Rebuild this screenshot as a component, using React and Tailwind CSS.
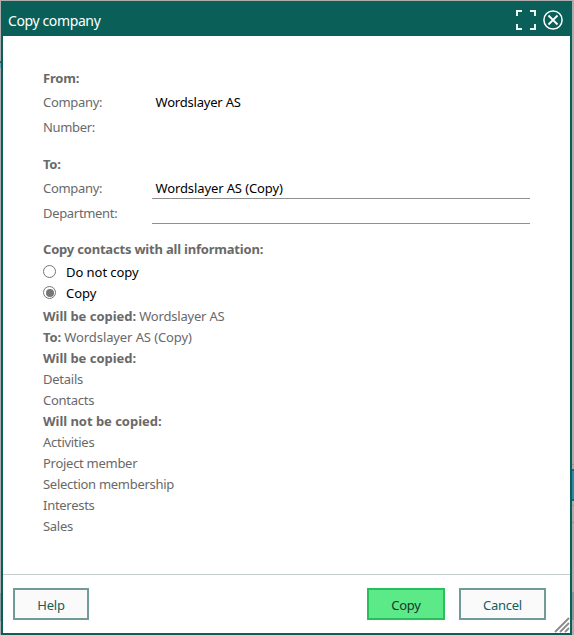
const COPIED = ["Details", "Contacts"];
const NOT_COPIED = ["Activities", "Project member", "Selection membership", "Interests", "Sales"];

function Heading({ children, className = "tracking-[-0.03px]" }) {
  return <div className={`font-bold ${className}`}>{children}</div>;
}

function Field({ label, value, editable }) {
  return (
    <div className="flex h-[25px]">
      <div className="w-[108px] leading-[25px] tracking-[-0.32px]">{label}</div>
      <div
        className={`ml-[0.5px] h-[23px] w-[378px] border-b pl-1 leading-[25px] text-black ${
          editable ? "border-[#8f8f8f] tracking-[-0.11px]" : "border-transparent tracking-[-0.2px]"
        }`}
      >
        {value}
      </div>
    </div>
  );
}

function Radio({ label, checked }) {
  return (
    <div className="flex h-[21px] items-center gap-[10px] text-black">
      <span className="mb-[2px] flex size-[13px] items-center justify-center rounded-full border border-[#757575] bg-white">
        {checked && <span className="size-[8px] rounded-full bg-[#757575]" />}
      </span>
      <span className="tracking-[-0.05px]">{label}</span>
    </div>
  );
}

function Button({ children, className }) {
  return (
    <button className={`flex h-8 items-center justify-center border-2 pt-[3px] ${className}`}>
      {children}
    </button>
  );
}

function LeftPage() {
  return (
    <div className="flex w-px flex-col bg-[#adadad]">
      <div className="mt-[60px] h-[2px] bg-[#315e6b]" />
      <div className="h-[5px] bg-[#62a2bd]" />
      <div className="mt-[525px] h-[28px] bg-[#879b9b]" />
    </div>
  );
}

function RightPage() {
  return (
    <div className="flex w-[2px] flex-col bg-[#adadad]">
      <div className="mt-[463px] h-px bg-[#929797]" />
      <div className="mt-[4px] h-[2px] bg-[#1b6a86]" />
      <div className="h-[28px] bg-[#3188a9]" />
      <div className="h-[2px] bg-[#1b6a86]" />
      <div className="mt-[4px] h-px bg-[#929797]" />
      <div className="mt-[16px] h-px bg-[#929797]" />
      <div className="mt-[69px] h-[28px] bg-[#879b9b]" />
    </div>
  );
}

export default function App() {
  return (
    <div className="flex h-[635px] w-[574px] overflow-hidden bg-[#adadad] pt-px font-['Noto_Sans',sans-serif] text-[13px] tracking-[-0.25px] text-[#696969]">
      <LeftPage />
      <div className="relative flex h-[634px] w-[571px] flex-col border-2 border-t-0 border-[#0a5f58] bg-white">
        <header className="flex h-[35px] items-center bg-[#0a5f58] pl-[5px] pr-[7px] text-white">
          <h1 className="flex-1 pt-[3px] text-[14px] tracking-[-0.38px]">Copy company</h1>
          <svg width="20" height="20" viewBox="0 0 20 20" fill="none" stroke="#edf5f3" strokeWidth="2" className="mr-[7px] mt-[3px]">
            <path d="M1 6V1h5M14 1h5v5M19 14v5h-5M6 19H1v-5" />
          </svg>
          <svg width="20" height="20" viewBox="0 0 20 20" fill="none" stroke="white" className="mt-[3px]">
            <circle cx="10" cy="10" r="9.1" strokeWidth="1.5" />
            <path d="M5.5 5.5l9 9M14.5 5.5l-9 9" strokeWidth="1.8" />
          </svg>
        </header>
        <main className="flex-1 pl-10 pt-[32px]">
          <Heading className="h-[22px] leading-[21px] tracking-[-0.2px]">From:</Heading>
          <Field label="Company:" value="Wordslayer AS" />
          <Field label="Number:" />
          <Heading className="mt-[14px] h-[22px] leading-[21px]">To:</Heading>
          <Field label="Company:" value="Wordslayer AS (Copy)" editable />
          <Field label="Department:" editable />
          <Heading className="mt-[13px] h-[23px] leading-[21px] tracking-[-0.2px]">
            Copy contacts with all information:
          </Heading>
          <Radio label="Do not copy" />
          <Radio label="Copy" checked />
          <div className="mt-[2px] leading-[21px]">
            <div className="tracking-[-0.2px]"><b className="tracking-[-0.03px]">Will be copied:</b> Wordslayer AS</div>
            <div className="tracking-[-0.1px]"><b>To:</b> Wordslayer AS (Copy)</div>
            <Heading>Will be copied:</Heading>
            {COPIED.map((item) => <div key={item}>{item}</div>)}
            <Heading>Will not be copied:</Heading>
            {NOT_COPIED.map((item) => <div key={item} className="tracking-[-0.28px]">{item}</div>)}
          </div>
        </main>
        <footer className="flex h-[59px] shrink-0 border-t border-[#c6cecd] pl-[10px] pt-[13px] text-[#145e5a]">
          <Button className="w-[76px] border-[#709b99] bg-[#fafafa]">Help</Button>
          <Button className="ml-[278px] w-[78px] border-[#28c05c] bg-[#5ce987] text-[#17382e]">Copy</Button>
          <Button className="ml-[14px] w-[87px] border-[#709b99] bg-[#fafafa]">Cancel</Button>
        </footer>
        <svg className="absolute bottom-0 right-0" width="17" height="16" viewBox="0 0 17 16" fill="none" stroke="#8b8b8b" strokeWidth="1.8">
          <path d="M2 15L16 1M7 15l9-9M12 15l4-4" />
        </svg>
      </div>
      <RightPage />
    </div>
  );
}
